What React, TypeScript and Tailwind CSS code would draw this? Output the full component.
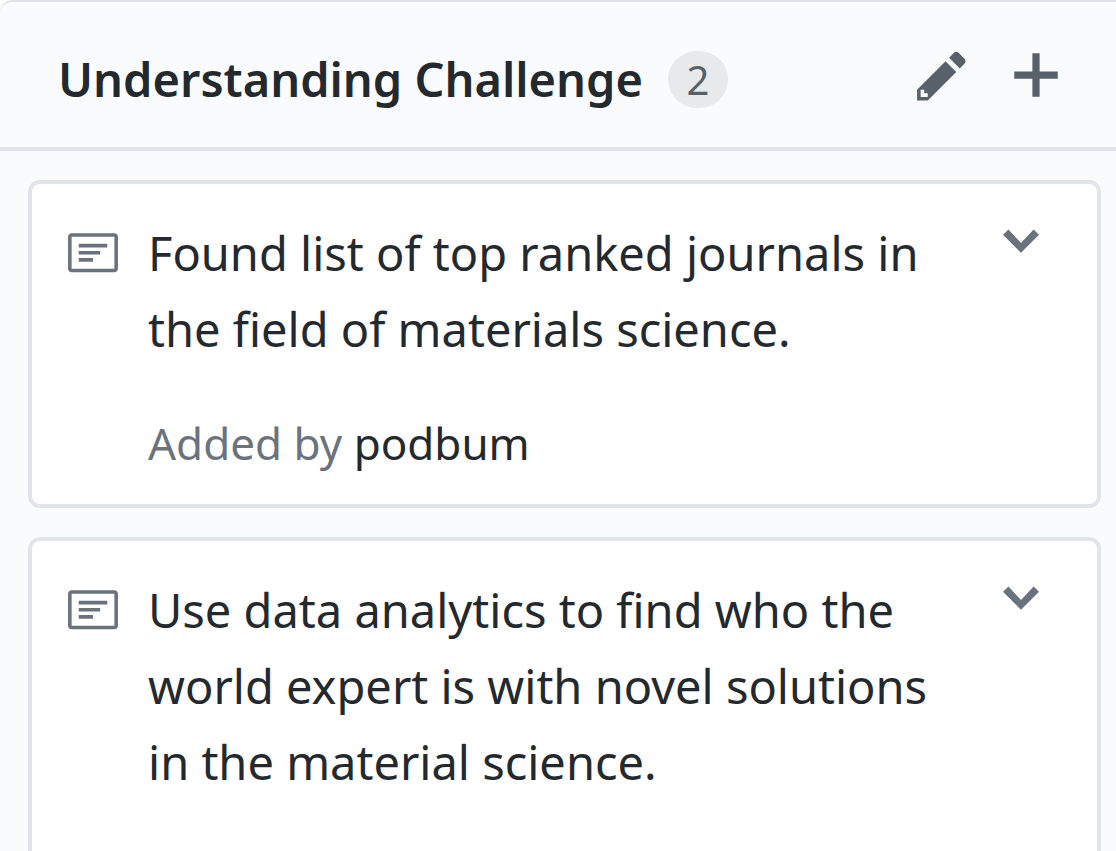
interface Note {
  id: number;
  text: string;
  author?: string;
}

const notes: Note[] = [
  {
    id: 1,
    text: "Found list of top ranked journals in the field of materials science.",
    author: "podbum",
  },
  {
    id: 2,
    text: "Use data analytics to find who the world expert is with novel solutions in the material science.",
  },
];

function PencilIcon() {
  return (
    <svg viewBox="0 0 14 16" className="h-[57px] w-[50px]" fill="currentColor" aria-hidden="true">
      <path
        fillRule="evenodd"
        d="M0 12v3h3l8-8-3-3-8 8zm3 2H1v-2h1v1h1v1zm10.3-9.3L12 6 9 3l1.3-1.3a.996.996 0 0 1 1.41 0l1.59 1.59c.39.39.39 1.02 0 1.41z"
      />
    </svg>
  );
}

function PlusIcon() {
  return (
    <svg viewBox="0 0 12 16" className="h-[58px] w-11" fill="currentColor" aria-hidden="true">
      <path fillRule="evenodd" d="M12 9H7v5H5V9H0V7h5V2h2v5h5v2z" />
    </svg>
  );
}

function NoteIcon() {
  return (
    <svg viewBox="0 0 14 16" className="h-[57px] w-[50px] shrink-0" fill="currentColor" aria-hidden="true">
      <path
        fillRule="evenodd"
        d="M3 10h4V9H3v1zm0-2h6V7H3v1zm0-2h8V5H3v1zm10 6H1V3h12v9zM1 2c-.55 0-1 .45-1 1v9c0 .55.45 1 1 1h12c.55 0 1-.45 1-1V3c0-.55-.45-1-1-1H1z"
      />
    </svg>
  );
}

function ChevronIcon() {
  return (
    <svg viewBox="0 0 10 16" className="h-[58px] w-9" fill="currentColor" aria-hidden="true">
      <path fillRule="evenodd" d="M5 11L0 6l1.5-1.5L5 8.25 8.5 4.5 10 6l-5 5z" />
    </svg>
  );
}

function NoteCard({ note }: { note: Note }) {
  return (
    <article className="flex items-start rounded-xl border-4 border-[#e1e4e8] bg-white pt-[29px] pr-[58px] pb-6 pl-9">
      <div className="mt-[13px] mr-[30px] text-[#6a737d]">
        <NoteIcon />
      </div>
      <div className="min-w-0 flex-1 pt-[2px] pr-14">
        <p className="text-[47px] leading-[76px] text-[#24292e]">{note.text}</p>
        {/* The row keeps its height when there is no author */}
        <div className="mt-10 min-h-[73px] text-[44px] leading-[73px] text-[#6a737d]">
          {note.author && (
            <p>
              Added by{" "}
              <a href="#" className="text-[#24292e]">
                {note.author}
              </a>
            </p>
          )}
        </div>
      </div>
      <button type="button" aria-label="Note options" className="text-[#6a737d]">
        <ChevronIcon />
      </button>
    </article>
  );
}

function App() {
  return (
    <div className="h-screen overflow-hidden rounded-tl-xl border-t-2 border-[#e1e4e8] bg-[#fafbfc] font-['Noto_Sans',sans-serif]">
      <header className="flex items-center border-b-4 border-[#e1e4e8] px-[58px] pt-[39px] pb-[30px]">
        <h1 className="text-[47px] leading-[76px] font-semibold text-[#24292e]">
          Understanding Challenge
        </h1>
        <span className="ml-[25px] flex h-[57px] w-[60px] items-center justify-center rounded-full bg-[#e8e9eb] text-[40px] leading-[57px] text-[#586069]">
          {notes.length}
        </span>
        <div className="mb-2 ml-auto flex items-center gap-[47px] text-[#586069]">
          <button type="button" aria-label="Edit column">
            <PencilIcon />
          </button>
          <button type="button" aria-label="Add note">
            <PlusIcon />
          </button>
        </div>
      </header>
      <main className="flex flex-col gap-[29px] pt-[29px] pr-[15px] pl-7">
        {notes.map((note) => (
          <NoteCard key={note.id} note={note} />
        ))}
      </main>
    </div>
  );
}

export default App;
